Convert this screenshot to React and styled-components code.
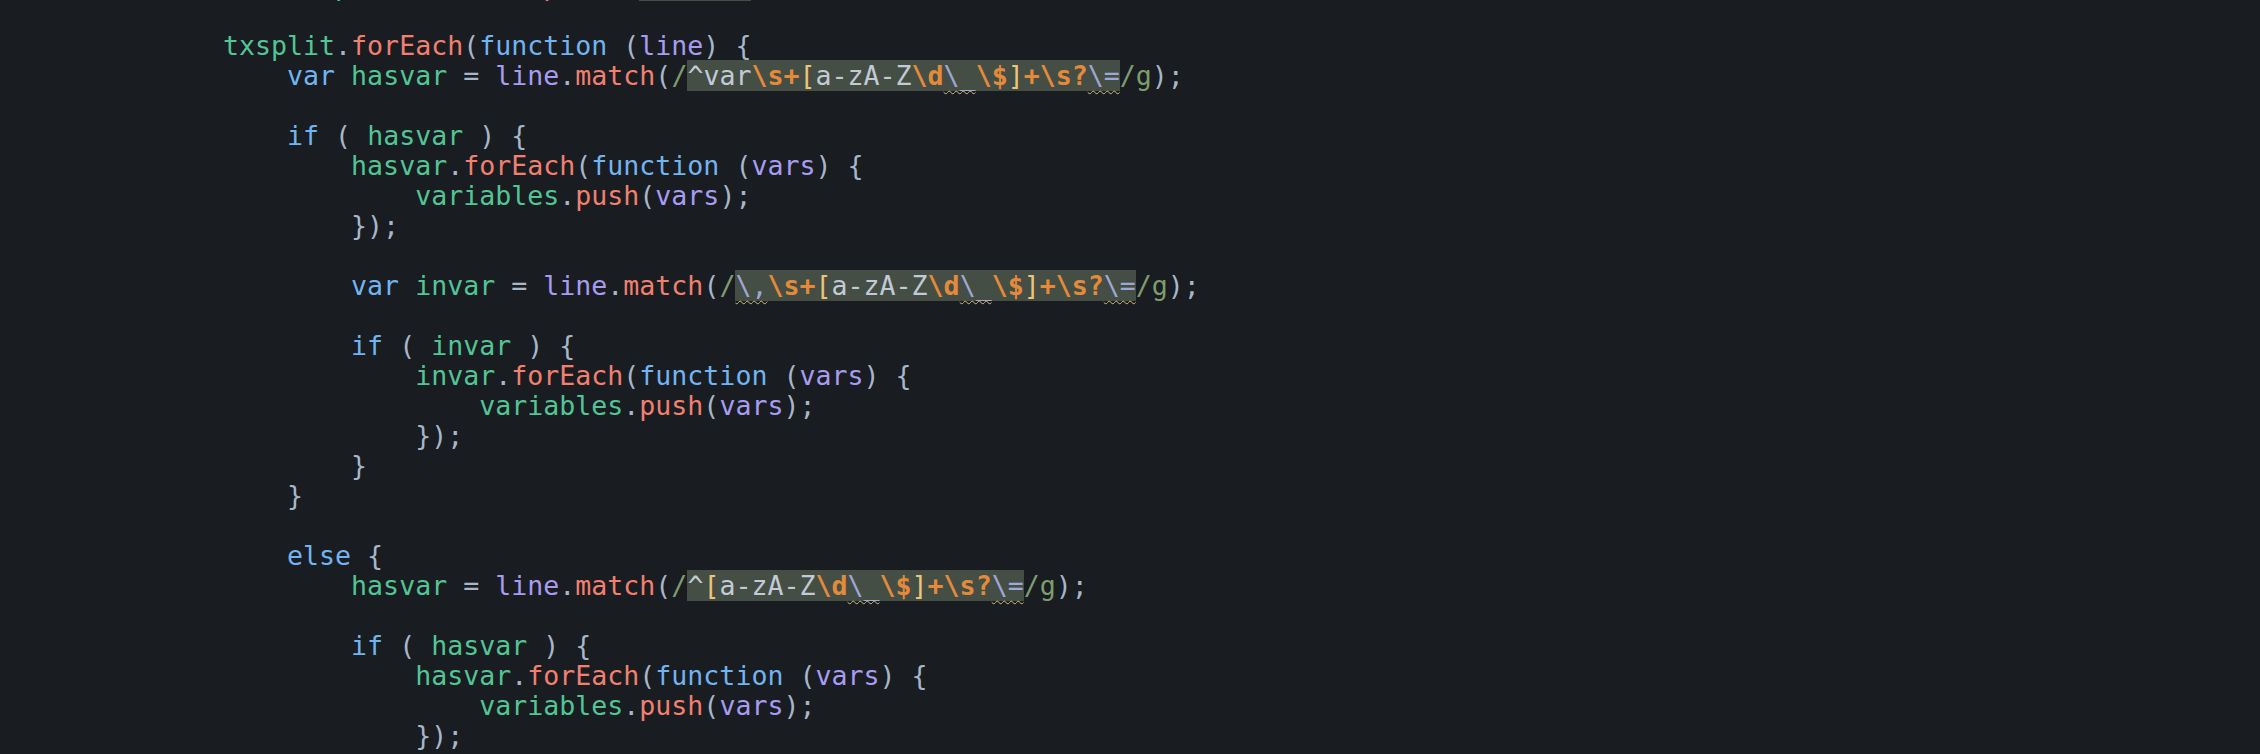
import React from 'react'
import styled, { createGlobalStyle } from 'styled-components'

const colors = {
  ident: '#52c594',
  method: '#f2806f',
  keyword: '#72b4ef',
  param: '#a79cf0',
  punct: '#a7b6c8',
  slash: '#7f9d6c',
  rxText: '#c3cad6',
  rxEscape: '#e38b3b',
  rxClass: '#ebc57a',
  rxWarn: '#9ea7d6',
}

const GlobalStyle = createGlobalStyle`
  html, body {
    margin: 0;
    padding: 0;
    background: #191c21;
  }
`

const Editor = styled.div`
  width: 2260px;
  height: 754px;
  overflow: hidden;
  background: #191c21;
`

const Code = styled.div`
  margin-top: -29px;
  padding-left: 223px;
  font-family: "DejaVu Sans Mono", "Liberation Mono", monospace;
  font-size: 26.6px;
  line-height: 30px;
  white-space: pre;
  color: ${colors.punct};
`

const Line = styled.div`
  height: 30px;
`

const Token = styled.span`
  color: ${p => colors[p.$kind] || colors.punct};
  font-weight: ${p => (p.$kind === 'rxEscape' ? 'bold' : 'normal')};
  ${p => p.$kind === 'rxWarn' && `
    text-decoration: underline wavy #cdbb7b;
    text-decoration-thickness: 1px;
    text-underline-offset: 5px;
  `}
`

const Regex = styled.span`
  background: #454e44;
`

// tokens: [kind, text]; a nested array is a highlighted regex body
const t = (kind, text) => [kind, text]

const classBody = [
  t('rxClass', '['), t('rxText', 'a-zA-Z'), t('rxEscape', '\\d'),
  t('rxWarn', '\\_'), t('rxEscape', '\\$'), t('rxClass', ']'),
  t('rxEscape', '+\\s?'), t('rxWarn', '\\='),
]

const forEachLine = (indent, name) => [
  t('', indent), t('ident', name), t('punct', '.'), t('method', 'forEach'),
  t('punct', '('), t('keyword', 'function'), t('punct', ' ('), t('param', 'vars'),
  t('punct', ') {'),
]

const pushLine = indent => [
  t('', indent), t('ident', 'variables'), t('punct', '.'), t('method', 'push'),
  t('punct', '('), t('param', 'vars'), t('punct', ');'),
]

const lines = [
  [t('keyword', 'var'), t('', ' '), t('ident', 'txsplit'), t('punct', ' = '),
    t('param', 'text'), t('punct', '.'), t('method', 'split'), t('punct', '('),
    t('slash', '/'), { rx: [t('rxClass', '['), t('rxEscape', '\\r\\n'), t('rxClass', ']'), t('rxEscape', '+')] },
    t('slash', '/'), t('punct', ');')],
  [],
  [t('ident', 'txsplit'), t('punct', '.'), t('method', 'forEach'), t('punct', '('),
    t('keyword', 'function'), t('punct', ' ('), t('param', 'line'), t('punct', ') {')],
  [t('', '    '), t('keyword', 'var'), t('', ' '), t('ident', 'hasvar'), t('punct', ' = '),
    t('param', 'line'), t('punct', '.'), t('method', 'match'), t('punct', '('), t('slash', '/'),
    { rx: [t('rxText', '^var'), t('rxEscape', '\\s+'), ...classBody] },
    t('slash', '/g'), t('punct', ');')],
  [],
  [t('', '    '), t('keyword', 'if'), t('punct', ' ( '), t('ident', 'hasvar'), t('punct', ' ) {')],
  forEachLine('        ', 'hasvar'),
  pushLine('            '),
  [t('punct', '        });')],
  [],
  [t('', '        '), t('keyword', 'var'), t('', ' '), t('ident', 'invar'), t('punct', ' = '),
    t('param', 'line'), t('punct', '.'), t('method', 'match'), t('punct', '('), t('slash', '/'),
    { rx: [t('rxWarn', '\\,'), t('rxEscape', '\\s+'), ...classBody] },
    t('slash', '/g'), t('punct', ');')],
  [],
  [t('', '        '), t('keyword', 'if'), t('punct', ' ( '), t('ident', 'invar'), t('punct', ' ) {')],
  forEachLine('            ', 'invar'),
  pushLine('                '),
  [t('punct', '            });')],
  [t('punct', '        }')],
  [t('punct', '    }')],
  [],
  [t('', '    '), t('keyword', 'else'), t('punct', ' {')],
  [t('', '        '), t('ident', 'hasvar'), t('punct', ' = '),
    t('param', 'line'), t('punct', '.'), t('method', 'match'), t('punct', '('), t('slash', '/'),
    { rx: [t('rxText', '^'), ...classBody] },
    t('slash', '/g'), t('punct', ');')],
  [],
  [t('', '        '), t('keyword', 'if'), t('punct', ' ( '), t('ident', 'hasvar'), t('punct', ' ) {')],
  forEachLine('            ', 'hasvar'),
  pushLine('                '),
  [t('punct', '            });')],
  [t('punct', '        }')],
]

const renderTokens = tokens =>
  tokens.map((tok, i) =>
    tok.rx ? (
      <Regex key={i}>{renderTokens(tok.rx)}</Regex>
    ) : (
      <Token key={i} $kind={tok[0]}>{tok[1]}</Token>
    )
  )

export default function App() {
  return (
    <Editor>
      <GlobalStyle />
      <Code>
        {lines.map((line, i) => (
          <Line key={i}>{renderTokens(line)}</Line>
        ))}
      </Code>
    </Editor>
  )
}
